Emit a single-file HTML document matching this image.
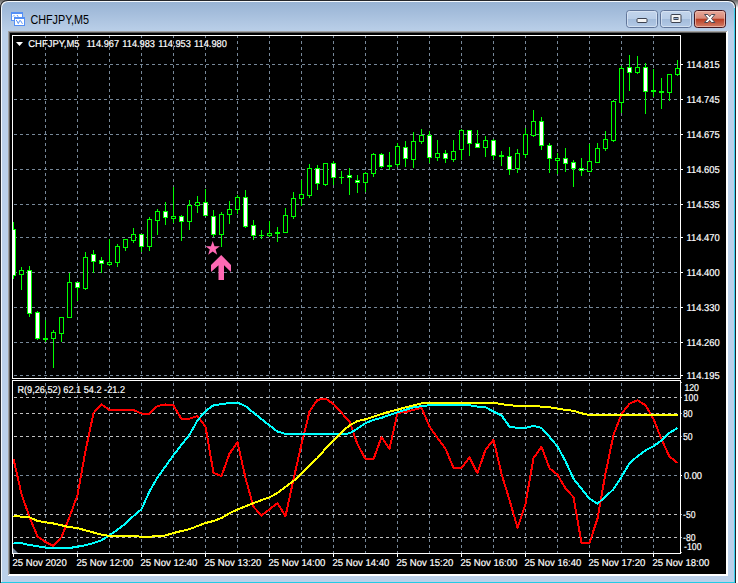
<!DOCTYPE html>
<html><head><meta charset="utf-8"><title>CHFJPY,M5</title>
<style>html,body{margin:0;padding:0;background:#fff;overflow:hidden}svg{display:block}</style></head>
<body>
<svg width="738" height="583" viewBox="0 0 738 583" font-family="'Liberation Sans', sans-serif">
<defs>
<linearGradient id="tb" x1="0" y1="0" x2="0" y2="1"><stop offset="0" stop-color="#98b3d4"/><stop offset="1" stop-color="#bbd0e9"/></linearGradient>
<linearGradient id="btn" x1="0" y1="0" x2="0" y2="1"><stop offset="0" stop-color="#c3d5ec"/><stop offset="0.48" stop-color="#b9cee8"/><stop offset="0.5" stop-color="#a3bcdb"/><stop offset="1" stop-color="#b4cae6"/></linearGradient>
<linearGradient id="cls" x1="0" y1="0" x2="0" y2="1"><stop offset="0" stop-color="#e8aa9c"/><stop offset="0.46" stop-color="#d98a78"/><stop offset="0.5" stop-color="#b93c22"/><stop offset="1" stop-color="#d4826c"/></linearGradient>
</defs>
<rect width="738" height="583" fill="#fff"/>
<linearGradient id="cs" x1="0" y1="0" x2="0" y2="1"><stop offset="0" stop-color="#6a6a6a"/><stop offset="0.4" stop-color="#9a9a9a"/><stop offset="1" stop-color="#ffffff"/></linearGradient>
<rect x="726" y="0" width="12" height="8" fill="url(#cs)"/>
<rect x="0" y="0" width="8" height="8" fill="url(#cs)"/>
<path d="M0 583V8Q0 0 8 0H728Q736 0 736 8V583Z" fill="#24262b"/>
<path d="M1 583V8Q1 1 8 1H728Q735 1 735 8V583Z" fill="#f4f8fc"/>
<path d="M2 583V9Q2 2 9 2H727Q734 2 734 9V583Z" fill="#bbd0e9"/>
<path d="M2 32V9Q2 2 9 2H727Q734 2 734 9V32Z" fill="url(#tb)"/>
<rect x="734" y="8" width="1" height="575" fill="#3ad0ee" shape-rendering="crispEdges"/>
<rect x="1" y="582" width="734" height="1" fill="#22cbe6" shape-rendering="crispEdges"/>
<g shape-rendering="crispEdges">
<rect x="8" y="31" width="720" height="545" fill="#fff"/>
<rect x="8" y="31" width="719" height="544" fill="#a0a0a0"/>
<rect x="9" y="32" width="717" height="542" fill="#5a5a5a"/>
<rect x="9" y="574" width="719" height="2" fill="#fff"/>
<rect x="726" y="32" width="2" height="544" fill="#fff"/>
<rect x="10" y="33" width="716" height="541" fill="#000"/>
</g>
<g stroke="#778899" stroke-width="1" stroke-dasharray="3 3" shape-rendering="crispEdges" fill="none">
<path d="M45.5 35V378"/>
<path d="M45.5 383V553"/>
<path d="M77.5 35V378"/>
<path d="M77.5 383V553"/>
<path d="M109.5 35V378"/>
<path d="M109.5 383V553"/>
<path d="M141.5 35V378"/>
<path d="M141.5 383V553"/>
<path d="M173.5 35V378"/>
<path d="M173.5 383V553"/>
<path d="M205.5 35V378"/>
<path d="M205.5 383V553"/>
<path d="M237.5 35V378"/>
<path d="M237.5 383V553"/>
<path d="M269.5 35V378"/>
<path d="M269.5 383V553"/>
<path d="M301.5 35V378"/>
<path d="M301.5 383V553"/>
<path d="M333.5 35V378"/>
<path d="M333.5 383V553"/>
<path d="M365.5 35V378"/>
<path d="M365.5 383V553"/>
<path d="M397.5 35V378"/>
<path d="M397.5 383V553"/>
<path d="M429.5 35V378"/>
<path d="M429.5 383V553"/>
<path d="M461.5 35V378"/>
<path d="M461.5 383V553"/>
<path d="M493.5 35V378"/>
<path d="M493.5 383V553"/>
<path d="M525.5 35V378"/>
<path d="M525.5 383V553"/>
<path d="M557.5 35V378"/>
<path d="M557.5 383V553"/>
<path d="M589.5 35V378"/>
<path d="M589.5 383V553"/>
<path d="M621.5 35V378"/>
<path d="M621.5 383V553"/>
<path d="M653.5 35V378"/>
<path d="M653.5 383V553"/>
<path d="M14 64.5H680"/>
<path d="M14 99.5H680"/>
<path d="M14 134.5H680"/>
<path d="M14 169.5H680"/>
<path d="M14 204.5H680"/>
<path d="M14 237.5H680"/>
<path d="M14 272.5H680"/>
<path d="M14 307.5H680"/>
<path d="M14 342.5H680"/>
<path d="M14 375.5H680"/>
<path d="M14 397.5H680" stroke="#c0c0c0"/>
<path d="M14 413.5H680" stroke="#c0c0c0"/>
<path d="M14 436.5H680" stroke="#c0c0c0"/>
<path d="M14 475.5H680" stroke="#778899"/>
<path d="M14 514.5H680" stroke="#c0c0c0"/>
<path d="M14 537.5H680" stroke="#c0c0c0"/>
</g>
<clipPath id="main"><rect x="13" y="36" width="667" height="342"/></clipPath>
<g shape-rendering="crispEdges" clip-path="url(#main)">
<rect x="13" y="222" width="1" height="57" fill="#00ff00"/>
<rect x="11" y="229" width="5" height="47" fill="#00ff00"/>
<rect x="12" y="230" width="3" height="45" fill="#fff"/>
<rect x="21" y="267" width="1" height="23" fill="#00ff00"/>
<rect x="19" y="270" width="5" height="5" fill="#00ff00"/>
<rect x="20" y="271" width="3" height="3" fill="#000"/>
<rect x="29" y="266" width="1" height="51" fill="#00ff00"/>
<rect x="27" y="270" width="5" height="44" fill="#00ff00"/>
<rect x="28" y="271" width="3" height="42" fill="#fff"/>
<rect x="37" y="311" width="1" height="29" fill="#00ff00"/>
<rect x="35" y="312" width="5" height="27" fill="#00ff00"/>
<rect x="36" y="313" width="3" height="25" fill="#fff"/>
<rect x="45" y="320" width="1" height="22" fill="#00ff00"/>
<rect x="43" y="338" width="5" height="2" fill="#00ff00"/>
<rect x="53" y="330" width="1" height="38" fill="#00ff00"/>
<rect x="51" y="332" width="5" height="7" fill="#00ff00"/>
<rect x="52" y="333" width="3" height="5" fill="#000"/>
<rect x="61" y="317" width="1" height="25" fill="#00ff00"/>
<rect x="59" y="317" width="5" height="17" fill="#00ff00"/>
<rect x="60" y="318" width="3" height="15" fill="#000"/>
<rect x="69" y="273" width="1" height="45" fill="#00ff00"/>
<rect x="67" y="282" width="5" height="36" fill="#00ff00"/>
<rect x="68" y="283" width="3" height="34" fill="#000"/>
<rect x="77" y="282" width="1" height="19" fill="#00ff00"/>
<rect x="75" y="282" width="5" height="6" fill="#00ff00"/>
<rect x="76" y="283" width="3" height="4" fill="#fff"/>
<rect x="85" y="252" width="1" height="38" fill="#00ff00"/>
<rect x="83" y="257" width="5" height="32" fill="#00ff00"/>
<rect x="84" y="258" width="3" height="30" fill="#000"/>
<rect x="93" y="250" width="1" height="23" fill="#00ff00"/>
<rect x="91" y="254" width="5" height="8" fill="#00ff00"/>
<rect x="92" y="255" width="3" height="6" fill="#fff"/>
<rect x="101" y="257" width="1" height="16" fill="#00ff00"/>
<rect x="99" y="260" width="5" height="4" fill="#00ff00"/>
<rect x="100" y="261" width="3" height="2" fill="#fff"/>
<rect x="109" y="239" width="1" height="27" fill="#00ff00"/>
<rect x="107" y="262" width="5" height="3" fill="#00ff00"/>
<rect x="108" y="263" width="3" height="1" fill="#000"/>
<rect x="117" y="244" width="1" height="23" fill="#00ff00"/>
<rect x="115" y="246" width="5" height="17" fill="#00ff00"/>
<rect x="116" y="247" width="3" height="15" fill="#000"/>
<rect x="125" y="239" width="1" height="12" fill="#00ff00"/>
<rect x="123" y="239" width="5" height="9" fill="#00ff00"/>
<rect x="124" y="240" width="3" height="7" fill="#000"/>
<rect x="133" y="228" width="1" height="15" fill="#00ff00"/>
<rect x="131" y="234" width="5" height="7" fill="#00ff00"/>
<rect x="132" y="235" width="3" height="5" fill="#000"/>
<rect x="141" y="234" width="1" height="18" fill="#00ff00"/>
<rect x="139" y="234" width="5" height="13" fill="#00ff00"/>
<rect x="140" y="235" width="3" height="11" fill="#fff"/>
<rect x="149" y="217" width="1" height="34" fill="#00ff00"/>
<rect x="147" y="219" width="5" height="28" fill="#00ff00"/>
<rect x="148" y="220" width="3" height="26" fill="#000"/>
<rect x="157" y="209" width="1" height="26" fill="#00ff00"/>
<rect x="155" y="211" width="5" height="10" fill="#00ff00"/>
<rect x="156" y="212" width="3" height="8" fill="#000"/>
<rect x="165" y="202" width="1" height="23" fill="#00ff00"/>
<rect x="163" y="211" width="5" height="7" fill="#00ff00"/>
<rect x="164" y="212" width="3" height="5" fill="#fff"/>
<rect x="173" y="187" width="1" height="36" fill="#00ff00"/>
<rect x="171" y="216" width="5" height="3" fill="#00ff00"/>
<rect x="172" y="217" width="3" height="1" fill="#000"/>
<rect x="181" y="215" width="1" height="26" fill="#00ff00"/>
<rect x="179" y="216" width="5" height="6" fill="#00ff00"/>
<rect x="180" y="217" width="3" height="4" fill="#fff"/>
<rect x="189" y="200" width="1" height="30" fill="#00ff00"/>
<rect x="187" y="205" width="5" height="17" fill="#00ff00"/>
<rect x="188" y="206" width="3" height="15" fill="#000"/>
<rect x="197" y="196" width="1" height="17" fill="#00ff00"/>
<rect x="195" y="202" width="5" height="4" fill="#00ff00"/>
<rect x="196" y="203" width="3" height="2" fill="#000"/>
<rect x="205" y="189" width="1" height="27" fill="#00ff00"/>
<rect x="203" y="202" width="5" height="14" fill="#00ff00"/>
<rect x="204" y="203" width="3" height="12" fill="#fff"/>
<rect x="213" y="210" width="1" height="27" fill="#00ff00"/>
<rect x="211" y="216" width="5" height="19" fill="#00ff00"/>
<rect x="212" y="217" width="3" height="17" fill="#fff"/>
<rect x="221" y="212" width="1" height="35" fill="#00ff00"/>
<rect x="219" y="214" width="5" height="21" fill="#00ff00"/>
<rect x="220" y="215" width="3" height="19" fill="#000"/>
<rect x="229" y="201" width="1" height="23" fill="#00ff00"/>
<rect x="227" y="209" width="5" height="6" fill="#00ff00"/>
<rect x="228" y="210" width="3" height="4" fill="#000"/>
<rect x="237" y="195" width="1" height="19" fill="#00ff00"/>
<rect x="235" y="197" width="5" height="13" fill="#00ff00"/>
<rect x="236" y="198" width="3" height="11" fill="#000"/>
<rect x="245" y="190" width="1" height="38" fill="#00ff00"/>
<rect x="243" y="197" width="5" height="30" fill="#00ff00"/>
<rect x="244" y="198" width="3" height="28" fill="#fff"/>
<rect x="253" y="220" width="1" height="20" fill="#00ff00"/>
<rect x="251" y="225" width="5" height="11" fill="#00ff00"/>
<rect x="252" y="226" width="3" height="9" fill="#fff"/>
<rect x="261" y="230" width="1" height="9" fill="#00ff00"/>
<rect x="259" y="235" width="5" height="1" fill="#00ff00"/>
<rect x="269" y="221" width="1" height="16" fill="#00ff00"/>
<rect x="267" y="233" width="5" height="3" fill="#00ff00"/>
<rect x="268" y="234" width="3" height="1" fill="#000"/>
<rect x="277" y="227" width="1" height="15" fill="#00ff00"/>
<rect x="275" y="232" width="5" height="2" fill="#00ff00"/>
<rect x="285" y="208" width="1" height="25" fill="#00ff00"/>
<rect x="283" y="215" width="5" height="18" fill="#00ff00"/>
<rect x="284" y="216" width="3" height="16" fill="#000"/>
<rect x="293" y="192" width="1" height="27" fill="#00ff00"/>
<rect x="291" y="198" width="5" height="19" fill="#00ff00"/>
<rect x="292" y="199" width="3" height="17" fill="#000"/>
<rect x="301" y="180" width="1" height="26" fill="#00ff00"/>
<rect x="299" y="194" width="5" height="5" fill="#00ff00"/>
<rect x="300" y="195" width="3" height="3" fill="#000"/>
<rect x="309" y="164" width="1" height="34" fill="#00ff00"/>
<rect x="307" y="168" width="5" height="28" fill="#00ff00"/>
<rect x="308" y="169" width="3" height="26" fill="#000"/>
<rect x="317" y="165" width="1" height="25" fill="#00ff00"/>
<rect x="315" y="168" width="5" height="16" fill="#00ff00"/>
<rect x="316" y="169" width="3" height="14" fill="#fff"/>
<rect x="325" y="163" width="1" height="23" fill="#00ff00"/>
<rect x="323" y="163" width="5" height="22" fill="#00ff00"/>
<rect x="324" y="164" width="3" height="20" fill="#000"/>
<rect x="333" y="161" width="1" height="24" fill="#00ff00"/>
<rect x="331" y="163" width="5" height="15" fill="#00ff00"/>
<rect x="332" y="164" width="3" height="13" fill="#fff"/>
<rect x="341" y="171" width="1" height="13" fill="#00ff00"/>
<rect x="339" y="177" width="5" height="1" fill="#00ff00"/>
<rect x="349" y="168" width="1" height="27" fill="#00ff00"/>
<rect x="347" y="175" width="5" height="3" fill="#00ff00"/>
<rect x="348" y="176" width="3" height="1" fill="#fff"/>
<rect x="357" y="175" width="1" height="18" fill="#00ff00"/>
<rect x="355" y="180" width="5" height="3" fill="#00ff00"/>
<rect x="356" y="181" width="3" height="1" fill="#fff"/>
<rect x="365" y="172" width="1" height="20" fill="#00ff00"/>
<rect x="363" y="173" width="5" height="10" fill="#00ff00"/>
<rect x="364" y="174" width="3" height="8" fill="#000"/>
<rect x="373" y="153" width="1" height="24" fill="#00ff00"/>
<rect x="371" y="154" width="5" height="20" fill="#00ff00"/>
<rect x="372" y="155" width="3" height="18" fill="#000"/>
<rect x="381" y="153" width="1" height="15" fill="#00ff00"/>
<rect x="379" y="154" width="5" height="13" fill="#00ff00"/>
<rect x="380" y="155" width="3" height="11" fill="#fff"/>
<rect x="389" y="152" width="1" height="18" fill="#00ff00"/>
<rect x="387" y="165" width="5" height="2" fill="#00ff00"/>
<rect x="397" y="143" width="1" height="24" fill="#00ff00"/>
<rect x="395" y="146" width="5" height="19" fill="#00ff00"/>
<rect x="396" y="147" width="3" height="17" fill="#000"/>
<rect x="405" y="141" width="1" height="26" fill="#00ff00"/>
<rect x="403" y="147" width="5" height="12" fill="#00ff00"/>
<rect x="404" y="148" width="3" height="10" fill="#fff"/>
<rect x="413" y="132" width="1" height="36" fill="#00ff00"/>
<rect x="411" y="141" width="5" height="19" fill="#00ff00"/>
<rect x="412" y="142" width="3" height="17" fill="#000"/>
<rect x="421" y="129" width="1" height="15" fill="#00ff00"/>
<rect x="419" y="135" width="5" height="7" fill="#00ff00"/>
<rect x="420" y="136" width="3" height="5" fill="#000"/>
<rect x="429" y="131" width="1" height="32" fill="#00ff00"/>
<rect x="427" y="135" width="5" height="23" fill="#00ff00"/>
<rect x="428" y="136" width="3" height="21" fill="#fff"/>
<rect x="437" y="140" width="1" height="21" fill="#00ff00"/>
<rect x="435" y="153" width="5" height="5" fill="#00ff00"/>
<rect x="436" y="154" width="3" height="3" fill="#000"/>
<rect x="445" y="150" width="1" height="13" fill="#00ff00"/>
<rect x="443" y="153" width="5" height="6" fill="#00ff00"/>
<rect x="444" y="154" width="3" height="4" fill="#fff"/>
<rect x="453" y="140" width="1" height="22" fill="#00ff00"/>
<rect x="451" y="151" width="5" height="9" fill="#00ff00"/>
<rect x="452" y="152" width="3" height="7" fill="#000"/>
<rect x="461" y="129" width="1" height="31" fill="#00ff00"/>
<rect x="459" y="130" width="5" height="20" fill="#00ff00"/>
<rect x="460" y="131" width="3" height="18" fill="#000"/>
<rect x="469" y="130" width="1" height="26" fill="#00ff00"/>
<rect x="467" y="130" width="5" height="14" fill="#00ff00"/>
<rect x="468" y="131" width="3" height="12" fill="#fff"/>
<rect x="477" y="130" width="1" height="18" fill="#00ff00"/>
<rect x="475" y="143" width="5" height="5" fill="#00ff00"/>
<rect x="476" y="144" width="3" height="3" fill="#fff"/>
<rect x="485" y="136" width="1" height="21" fill="#00ff00"/>
<rect x="483" y="140" width="5" height="8" fill="#00ff00"/>
<rect x="484" y="141" width="3" height="6" fill="#000"/>
<rect x="493" y="139" width="1" height="21" fill="#00ff00"/>
<rect x="491" y="140" width="5" height="16" fill="#00ff00"/>
<rect x="492" y="141" width="3" height="14" fill="#fff"/>
<rect x="501" y="151" width="1" height="15" fill="#00ff00"/>
<rect x="499" y="155" width="5" height="2" fill="#00ff00"/>
<rect x="509" y="147" width="1" height="28" fill="#00ff00"/>
<rect x="507" y="156" width="5" height="14" fill="#00ff00"/>
<rect x="508" y="157" width="3" height="12" fill="#fff"/>
<rect x="517" y="149" width="1" height="24" fill="#00ff00"/>
<rect x="515" y="153" width="5" height="16" fill="#00ff00"/>
<rect x="516" y="154" width="3" height="14" fill="#000"/>
<rect x="525" y="128" width="1" height="30" fill="#00ff00"/>
<rect x="523" y="134" width="5" height="21" fill="#00ff00"/>
<rect x="524" y="135" width="3" height="19" fill="#000"/>
<rect x="533" y="110" width="1" height="27" fill="#00ff00"/>
<rect x="531" y="121" width="5" height="15" fill="#00ff00"/>
<rect x="532" y="122" width="3" height="13" fill="#000"/>
<rect x="541" y="117" width="1" height="33" fill="#00ff00"/>
<rect x="539" y="121" width="5" height="25" fill="#00ff00"/>
<rect x="540" y="122" width="3" height="23" fill="#fff"/>
<rect x="549" y="143" width="1" height="30" fill="#00ff00"/>
<rect x="547" y="145" width="5" height="14" fill="#00ff00"/>
<rect x="548" y="146" width="3" height="12" fill="#fff"/>
<rect x="557" y="153" width="1" height="21" fill="#00ff00"/>
<rect x="555" y="158" width="5" height="3" fill="#00ff00"/>
<rect x="556" y="159" width="3" height="1" fill="#000"/>
<rect x="565" y="148" width="1" height="24" fill="#00ff00"/>
<rect x="563" y="158" width="5" height="6" fill="#00ff00"/>
<rect x="564" y="159" width="3" height="4" fill="#fff"/>
<rect x="573" y="160" width="1" height="27" fill="#00ff00"/>
<rect x="571" y="162" width="5" height="7" fill="#00ff00"/>
<rect x="572" y="163" width="3" height="5" fill="#fff"/>
<rect x="581" y="158" width="1" height="18" fill="#00ff00"/>
<rect x="579" y="168" width="5" height="3" fill="#00ff00"/>
<rect x="580" y="169" width="3" height="1" fill="#fff"/>
<rect x="589" y="144" width="1" height="28" fill="#00ff00"/>
<rect x="587" y="161" width="5" height="11" fill="#00ff00"/>
<rect x="588" y="162" width="3" height="9" fill="#000"/>
<rect x="597" y="143" width="1" height="20" fill="#00ff00"/>
<rect x="595" y="148" width="5" height="15" fill="#00ff00"/>
<rect x="596" y="149" width="3" height="13" fill="#000"/>
<rect x="605" y="131" width="1" height="20" fill="#00ff00"/>
<rect x="603" y="139" width="5" height="10" fill="#00ff00"/>
<rect x="604" y="140" width="3" height="8" fill="#000"/>
<rect x="613" y="100" width="1" height="42" fill="#00ff00"/>
<rect x="611" y="101" width="5" height="40" fill="#00ff00"/>
<rect x="612" y="102" width="3" height="38" fill="#000"/>
<rect x="621" y="66" width="1" height="47" fill="#00ff00"/>
<rect x="619" y="68" width="5" height="35" fill="#00ff00"/>
<rect x="620" y="69" width="3" height="33" fill="#000"/>
<rect x="629" y="55" width="1" height="36" fill="#00ff00"/>
<rect x="627" y="67" width="5" height="6" fill="#00ff00"/>
<rect x="628" y="68" width="3" height="4" fill="#fff"/>
<rect x="637" y="56" width="1" height="18" fill="#00ff00"/>
<rect x="635" y="67" width="5" height="6" fill="#00ff00"/>
<rect x="636" y="68" width="3" height="4" fill="#000"/>
<rect x="645" y="63" width="1" height="51" fill="#00ff00"/>
<rect x="643" y="67" width="5" height="25" fill="#00ff00"/>
<rect x="644" y="68" width="3" height="23" fill="#fff"/>
<rect x="653" y="69" width="1" height="28" fill="#00ff00"/>
<rect x="651" y="90" width="5" height="2" fill="#00ff00"/>
<rect x="661" y="78" width="1" height="31" fill="#00ff00"/>
<rect x="659" y="91" width="5" height="2" fill="#00ff00"/>
<rect x="669" y="74" width="1" height="27" fill="#00ff00"/>
<rect x="667" y="74" width="5" height="19" fill="#00ff00"/>
<rect x="668" y="75" width="3" height="17" fill="#000"/>
<rect x="677" y="60" width="1" height="16" fill="#00ff00"/>
<rect x="675" y="68" width="5" height="7" fill="#00ff00"/>
<rect x="676" y="69" width="3" height="5" fill="#000"/>
</g>
<polygon points="212.7,241.0 214.5,246.2 219.9,246.3 215.6,249.5 217.2,254.7 212.7,251.6 208.2,254.7 209.8,249.5 205.5,246.3 210.9,246.2" fill="#ff69b4"/>
<polygon points="221.2,255 231,265 231,272 224,265.2 224,280 218.5,280 218.5,265.2 211,272 211,265" fill="#ff69b4"/>
<clipPath id="sub"><rect x="13" y="381" width="667" height="172"/></clipPath>
<g clip-path="url(#sub)">
<polyline points="13.5,459.0 21.5,494.0 29.5,517.0 37.5,536.5 45.5,542.0 53.5,546.0 61.5,537.0 69.5,517.0 77.5,495.0 85.5,451.0 93.5,413.0 101.5,404.5 109.5,410.0 117.5,410.0 125.5,410.0 133.5,410.0 141.5,413.5 149.5,413.5 157.5,406.0 165.5,404.5 173.5,405.5 181.5,419.0 189.5,418.7 197.5,416.0 205.5,426.6 213.5,473.0 221.5,476.0 229.5,453.7 237.5,442.3 245.5,478.0 253.5,506.8 261.5,515.5 269.5,509.3 277.5,503.2 285.5,516.2 293.5,479.3 301.5,444.2 309.5,411.6 317.5,399.8 325.5,398.6 333.5,404.0 341.5,412.8 349.5,421.6 357.5,444.2 365.5,459.2 373.5,459.2 381.5,437.2 389.5,448.7 397.5,412.8 405.5,412.1 413.5,409.8 421.5,407.8 429.5,426.6 437.5,437.9 445.5,448.7 453.5,468.0 461.5,468.0 469.5,457.5 477.5,473.2 485.5,449.7 493.5,439.8 501.5,473.8 509.5,500.0 517.5,527.7 525.5,503.8 533.5,458.2 541.5,446.8 549.5,468.3 557.5,474.6 565.5,488.4 573.5,497.2 581.5,542.8 589.5,542.8 597.5,518.5 605.5,473.3 613.5,435.0 621.5,414.1 629.5,403.6 637.5,400.3 645.5,405.3 653.5,419.1 661.5,439.2 669.5,456.7 677.5,462.8" fill="none" stroke="#ff0000" stroke-width="2" stroke-linejoin="round" shape-rendering="crispEdges"/>
<polyline points="13.5,543.0 21.5,543.2 29.5,545.0 37.5,546.2 45.5,547.6 53.5,548.0 61.5,548.0 69.5,548.0 77.5,546.7 85.5,545.3 93.5,543.0 101.5,540.3 109.5,535.2 117.5,529.7 125.5,523.5 133.5,516.0 141.5,509.3 149.5,491.3 157.5,477.5 165.5,466.4 173.5,455.1 181.5,444.8 189.5,434.8 197.5,420.4 205.5,411.1 213.5,405.3 221.5,404.1 229.5,403.1 237.5,402.6 245.5,406.1 253.5,412.8 261.5,419.1 269.5,425.4 277.5,431.6 285.5,433.9 293.5,433.9 301.5,433.9 309.5,433.9 317.5,433.9 325.5,433.9 333.5,433.9 341.5,433.9 349.5,433.4 357.5,428.6 365.5,423.2 373.5,419.9 381.5,417.9 389.5,414.9 397.5,412.3 405.5,409.8 413.5,407.3 421.5,406.1 429.5,405.3 437.5,404.8 445.5,404.8 453.5,404.8 461.5,404.8 469.5,405.3 477.5,406.6 485.5,407.1 493.5,411.6 501.5,415.4 509.5,426.6 517.5,427.9 525.5,427.9 533.5,425.9 541.5,427.9 549.5,437.0 557.5,446.4 565.5,461.2 573.5,478.8 581.5,488.8 589.5,498.6 597.5,503.6 605.5,496.7 613.5,489.2 621.5,477.0 629.5,463.1 637.5,456.3 645.5,450.4 653.5,446.2 661.5,440.4 669.5,432.9 677.5,427.9" fill="none" stroke="#00ffff" stroke-width="2" stroke-linejoin="round" shape-rendering="crispEdges"/>
<polyline points="13.5,516.0 21.5,516.6 29.5,517.2 37.5,521.0 45.5,522.3 53.5,523.5 61.5,525.3 69.5,527.2 77.5,528.0 85.5,530.4 93.5,532.5 101.5,534.6 109.5,536.0 117.5,536.0 125.5,536.0 133.5,536.0 141.5,536.8 149.5,536.8 157.5,536.0 165.5,535.5 173.5,533.0 181.5,531.0 189.5,529.2 197.5,526.0 205.5,523.0 213.5,521.0 221.5,518.0 229.5,513.3 237.5,509.5 245.5,506.4 253.5,503.1 261.5,500.1 269.5,497.3 277.5,493.0 285.5,486.8 293.5,481.0 301.5,473.7 309.5,465.5 317.5,458.0 325.5,448.7 333.5,440.4 341.5,432.1 349.5,425.4 357.5,421.1 365.5,419.3 373.5,416.6 381.5,414.1 389.5,411.6 397.5,409.8 405.5,407.3 413.5,405.3 421.5,403.3 429.5,402.8 437.5,402.8 445.5,402.8 453.5,402.8 461.5,402.8 469.5,402.8 477.5,402.8 485.5,402.8 493.5,402.8 501.5,404.1 509.5,405.3 517.5,405.8 525.5,406.1 533.5,406.1 541.5,406.6 549.5,407.2 557.5,408.6 565.5,410.0 573.5,410.8 581.5,413.3 589.5,415.0 597.5,415.0 605.5,415.0 613.5,415.0 621.5,415.0 629.5,415.0 637.5,415.0 645.5,415.0 653.5,415.0 661.5,415.0 669.5,415.0 677.5,415.0" fill="none" stroke="#ffff00" stroke-width="2" stroke-linejoin="round" shape-rendering="crispEdges"/>
</g>
<g shape-rendering="crispEdges" fill="#fff">
<rect x="12" y="35" width="669" height="1"/>
<rect x="12" y="35" width="1" height="344"/>
<rect x="12" y="378" width="669" height="1"/>
<rect x="680" y="35" width="1" height="344"/>
<rect x="12" y="380" width="669" height="1"/>
<rect x="12" y="380" width="1" height="174"/>
<rect x="12" y="553" width="669" height="1"/>
<rect x="680" y="380" width="1" height="174"/>
<rect x="681" y="64" width="2" height="1"/>
<rect x="681" y="99" width="2" height="1"/>
<rect x="681" y="134" width="2" height="1"/>
<rect x="681" y="169" width="2" height="1"/>
<rect x="681" y="204" width="2" height="1"/>
<rect x="681" y="237" width="2" height="1"/>
<rect x="681" y="272" width="2" height="1"/>
<rect x="681" y="307" width="2" height="1"/>
<rect x="681" y="342" width="2" height="1"/>
<rect x="681" y="375" width="2" height="1"/>
<rect x="681" y="382" width="1" height="1" fill="#aaa"/>
<rect x="681" y="397" width="1" height="1" fill="#aaa"/>
<rect x="681" y="413" width="1" height="1" fill="#aaa"/>
<rect x="681" y="436" width="1" height="1" fill="#aaa"/>
<rect x="681" y="475" width="1" height="1" fill="#fff"/>
<rect x="681" y="514" width="1" height="1" fill="#aaa"/>
<rect x="681" y="537" width="1" height="1" fill="#aaa"/>
<rect x="681" y="552" width="1" height="1" fill="#aaa"/>
<rect x="13" y="554" width="1" height="3"/>
<rect x="77" y="554" width="1" height="3"/>
<rect x="141" y="554" width="1" height="3"/>
<rect x="205" y="554" width="1" height="3"/>
<rect x="269" y="554" width="1" height="3"/>
<rect x="333" y="554" width="1" height="3"/>
<rect x="397" y="554" width="1" height="3"/>
<rect x="461" y="554" width="1" height="3"/>
<rect x="525" y="554" width="1" height="3"/>
<rect x="589" y="554" width="1" height="3"/>
<rect x="653" y="554" width="1" height="3"/>
</g>
<polygon points="13,548 13,553 18,553" fill="#778899"/>
<text x="686.4" y="67.6" font-size="10" fill="#fff" textLength="33.3" lengthAdjust="spacingAndGlyphs" stroke="#fff" stroke-width="0.2" text-rendering="geometricPrecision">114.815</text>
<text x="686.4" y="102.6" font-size="10" fill="#fff" textLength="33.3" lengthAdjust="spacingAndGlyphs" stroke="#fff" stroke-width="0.2" text-rendering="geometricPrecision">114.745</text>
<text x="686.4" y="137.6" font-size="10" fill="#fff" textLength="33.3" lengthAdjust="spacingAndGlyphs" stroke="#fff" stroke-width="0.2" text-rendering="geometricPrecision">114.675</text>
<text x="686.4" y="172.6" font-size="10" fill="#fff" textLength="33.3" lengthAdjust="spacingAndGlyphs" stroke="#fff" stroke-width="0.2" text-rendering="geometricPrecision">114.605</text>
<text x="686.4" y="207.6" font-size="10" fill="#fff" textLength="33.3" lengthAdjust="spacingAndGlyphs" stroke="#fff" stroke-width="0.2" text-rendering="geometricPrecision">114.535</text>
<text x="686.4" y="240.6" font-size="10" fill="#fff" textLength="33.3" lengthAdjust="spacingAndGlyphs" stroke="#fff" stroke-width="0.2" text-rendering="geometricPrecision">114.470</text>
<text x="686.4" y="275.6" font-size="10" fill="#fff" textLength="33.3" lengthAdjust="spacingAndGlyphs" stroke="#fff" stroke-width="0.2" text-rendering="geometricPrecision">114.400</text>
<text x="686.4" y="310.6" font-size="10" fill="#fff" textLength="33.3" lengthAdjust="spacingAndGlyphs" stroke="#fff" stroke-width="0.2" text-rendering="geometricPrecision">114.330</text>
<text x="686.4" y="345.6" font-size="10" fill="#fff" textLength="33.3" lengthAdjust="spacingAndGlyphs" stroke="#fff" stroke-width="0.2" text-rendering="geometricPrecision">114.260</text>
<text x="686.4" y="378.6" font-size="10" fill="#fff" textLength="33.3" lengthAdjust="spacingAndGlyphs" stroke="#fff" stroke-width="0.2" text-rendering="geometricPrecision">114.195</text>
<text x="684.4" y="390.6" font-size="10" fill="#fff" textLength="14.6" lengthAdjust="spacingAndGlyphs" stroke="#fff" stroke-width="0.2" text-rendering="geometricPrecision">120</text>
<text x="683.8" y="400.6" font-size="10" fill="#fff" textLength="14.4" lengthAdjust="spacingAndGlyphs" stroke="#fff" stroke-width="0.2" text-rendering="geometricPrecision">100</text>
<text x="682.9" y="417" font-size="10" fill="#fff" textLength="9.7" lengthAdjust="spacingAndGlyphs" stroke="#fff" stroke-width="0.2" text-rendering="geometricPrecision">80</text>
<text x="682.9" y="440" font-size="10" fill="#fff" textLength="9.7" lengthAdjust="spacingAndGlyphs" stroke="#fff" stroke-width="0.2" text-rendering="geometricPrecision">50</text>
<text x="683.9" y="479" font-size="10" fill="#fff" textLength="18.1" lengthAdjust="spacingAndGlyphs" stroke="#fff" stroke-width="0.2" text-rendering="geometricPrecision">0.00</text>
<text x="683.1" y="518" font-size="10" fill="#fff" textLength="12.4" lengthAdjust="spacingAndGlyphs" stroke="#fff" stroke-width="0.2" text-rendering="geometricPrecision">-50</text>
<text x="683.1" y="541" font-size="10" fill="#fff" textLength="12.4" lengthAdjust="spacingAndGlyphs" stroke="#fff" stroke-width="0.2" text-rendering="geometricPrecision">-80</text>
<text x="684.1" y="550" font-size="10" fill="#fff" textLength="17.4" lengthAdjust="spacingAndGlyphs" stroke="#fff" stroke-width="0.2" text-rendering="geometricPrecision">-100</text>
<text x="12.5" y="566" font-size="10" fill="#fff" textLength="54.2" lengthAdjust="spacingAndGlyphs" stroke="#fff" stroke-width="0.2" text-rendering="geometricPrecision">25 Nov 2020</text>
<text x="76.5" y="566" font-size="10" fill="#fff" textLength="56.9" lengthAdjust="spacingAndGlyphs" stroke="#fff" stroke-width="0.2" text-rendering="geometricPrecision">25 Nov 12:00</text>
<text x="140.5" y="566" font-size="10" fill="#fff" textLength="56.9" lengthAdjust="spacingAndGlyphs" stroke="#fff" stroke-width="0.2" text-rendering="geometricPrecision">25 Nov 12:40</text>
<text x="204.5" y="566" font-size="10" fill="#fff" textLength="56.9" lengthAdjust="spacingAndGlyphs" stroke="#fff" stroke-width="0.2" text-rendering="geometricPrecision">25 Nov 13:20</text>
<text x="268.5" y="566" font-size="10" fill="#fff" textLength="56.9" lengthAdjust="spacingAndGlyphs" stroke="#fff" stroke-width="0.2" text-rendering="geometricPrecision">25 Nov 14:00</text>
<text x="332.5" y="566" font-size="10" fill="#fff" textLength="56.9" lengthAdjust="spacingAndGlyphs" stroke="#fff" stroke-width="0.2" text-rendering="geometricPrecision">25 Nov 14:40</text>
<text x="396.5" y="566" font-size="10" fill="#fff" textLength="56.9" lengthAdjust="spacingAndGlyphs" stroke="#fff" stroke-width="0.2" text-rendering="geometricPrecision">25 Nov 15:20</text>
<text x="460.5" y="566" font-size="10" fill="#fff" textLength="56.9" lengthAdjust="spacingAndGlyphs" stroke="#fff" stroke-width="0.2" text-rendering="geometricPrecision">25 Nov 16:00</text>
<text x="524.5" y="566" font-size="10" fill="#fff" textLength="56.9" lengthAdjust="spacingAndGlyphs" stroke="#fff" stroke-width="0.2" text-rendering="geometricPrecision">25 Nov 16:40</text>
<text x="588.5" y="566" font-size="10" fill="#fff" textLength="56.9" lengthAdjust="spacingAndGlyphs" stroke="#fff" stroke-width="0.2" text-rendering="geometricPrecision">25 Nov 17:20</text>
<text x="652.5" y="566" font-size="10" fill="#fff" textLength="56.9" lengthAdjust="spacingAndGlyphs" stroke="#fff" stroke-width="0.2" text-rendering="geometricPrecision">25 Nov 18:00</text>
<polygon points="16,42 23,42 19.5,46" fill="#fff"/>
<text x="28.3" y="47.3" font-size="10" fill="#fff" textLength="51.2" lengthAdjust="spacingAndGlyphs" stroke="#fff" stroke-width="0.2" text-rendering="geometricPrecision">CHFJPY,M5</text>
<text x="86.4" y="47.3" font-size="10" fill="#fff" textLength="32.7" lengthAdjust="spacingAndGlyphs" stroke="#fff" stroke-width="0.2" text-rendering="geometricPrecision">114.967</text>
<text x="122.30000000000001" y="47.3" font-size="10" fill="#fff" textLength="32.7" lengthAdjust="spacingAndGlyphs" stroke="#fff" stroke-width="0.2" text-rendering="geometricPrecision">114.983</text>
<text x="158.2" y="47.3" font-size="10" fill="#fff" textLength="32.7" lengthAdjust="spacingAndGlyphs" stroke="#fff" stroke-width="0.2" text-rendering="geometricPrecision">114.953</text>
<text x="194.1" y="47.3" font-size="10" fill="#fff" textLength="32.7" lengthAdjust="spacingAndGlyphs" stroke="#fff" stroke-width="0.2" text-rendering="geometricPrecision">114.980</text>
<text x="17.4" y="393" font-size="10" fill="#fff" textLength="107.6" lengthAdjust="spacingAndGlyphs" stroke="#fff" stroke-width="0.2" text-rendering="geometricPrecision">R(9,26,52) 62.1 54.2 -21.2</text>
<g shape-rendering="crispEdges">
<rect x="11" y="12" width="12" height="9" fill="#5590f5"/>
<rect x="12" y="14" width="10" height="6" fill="#fff"/>
<rect x="14" y="17" width="11" height="9" fill="#5590f5"/>
<rect x="15" y="19" width="9" height="6" fill="#fff"/>
</g>
<path d="M13 16.5l1-1 1 1M17 15l1.2 1.8" stroke="#5590f5" fill="none" stroke-width="1"/>
<path d="M16 20l1 1 1.3 2.6 1.4-3h0.8l1 1.6 1 1.6" stroke="#5590f5" fill="none" stroke-width="1"/>
<text x="30.4" y="24" font-size="13" fill="#000" textLength="58.7" lengthAdjust="spacingAndGlyphs" >CHFJPY,M5</text>
<rect x="626.5" y="10.5" width="31" height="17" rx="3" fill="url(#btn)" stroke="#61769a"/>
<rect x="627.5" y="11.5" width="29" height="15" rx="2" fill="none" stroke="#dfeaf7" stroke-opacity="0.7"/>
<rect x="660.5" y="10.5" width="31" height="17" rx="3" fill="url(#btn)" stroke="#61769a"/>
<rect x="661.5" y="11.5" width="29" height="15" rx="2" fill="none" stroke="#dfeaf7" stroke-opacity="0.7"/>
<rect x="694.5" y="10.5" width="31" height="17" rx="3" fill="url(#cls)" stroke="#43161f"/>
<rect x="695.5" y="11.5" width="29" height="15" rx="2" fill="none" stroke="#f0c4b8" stroke-opacity="0.7"/>
<rect x="637" y="18.5" width="10" height="4" rx="1" fill="#f4f4f4" stroke="#3c4250"/>
<rect x="671" y="14.5" width="10" height="8" rx="1" fill="#f4f4f4" stroke="#3c4250"/>
<rect x="674" y="17.5" width="4" height="2" fill="#8fa9cc" stroke="#3c4250"/>
<path d="M704.5 14.5h3.4l1.8 2.1 1.8-2.1h3.4l-3.4 4 3.4 4h-3.4l-1.8-2.1-1.8 2.1h-3.4l3.4-4z" fill="#fff" stroke="#4a4a55" stroke-width="1" stroke-linejoin="round"/>
</svg>
</body></html>
